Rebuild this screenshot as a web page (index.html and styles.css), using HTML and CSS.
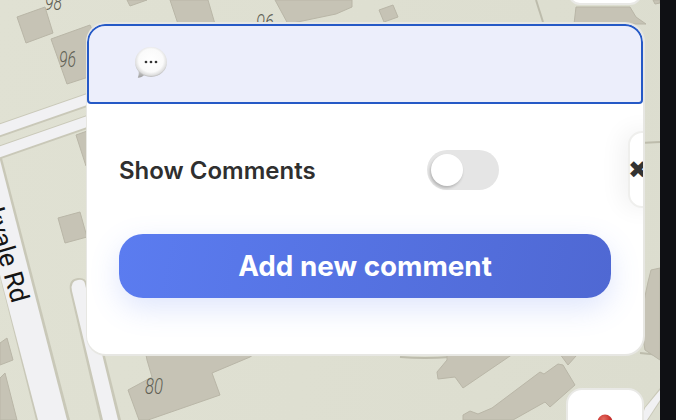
FILE: index.html
```html
<!DOCTYPE html>
<html lang="en">
<head>
<meta charset="utf-8">
<title>Comments</title>
<link rel="stylesheet" href="styles.css">
</head>
<body>
<div class="screen">
  <main class="map">
    <svg class="map-art" width="660" height="420" viewBox="0 0 660 420" aria-hidden="true">
      <g class="road-edge">
        <path d="M-2 124 L90 92 L90 106 L-2 138Z"/>
        <path d="M-2 146 L90 114 L90 128 L-2 160Z"/>
        <path d="M2 158 L-30 158 L36 420 L70 420Z"/>
        <path d="M70 291 Q68 279 78 278 Q86 277 87 284 L121 420 L100 420Z"/>
        <path d="M644 408 L660 388 L660 402 L648 420 L640 420Z"/>
      </g>
      <g class="road">
        <path d="M-2 125 L90 93 L90 104 L-2 136Z"/>
        <path d="M-2 147 L90 115 L90 126 L-2 158Z"/>
        <path d="M0 160 L-30 160 L38 420 L67 420Z"/>
        <path d="M72 291 Q70 281 78 280 Q84 279 85 284 L118 420 L103 420Z"/>
        <path d="M645 408 L660 390 L660 400 L647 420 L641 420Z"/>
      </g>
      <g class="lines">
        <path d="M536 0 L543 22"/>
        <path d="M640 143 L660 142"/>
        <path d="M640 353 L660 355"/>
        <path d="M400 357 Q425 359 450 357"/>
      </g>
      <g class="buildings">
        <path d="M17 17 L45 7 L53 33 L26 43Z"/>
        <path d="M51 39 L90 25 L110 70 L67 84Z"/>
        <path d="M127 0 L147 0 L130 6Z"/>
        <path d="M170 0 L208 0 L215 24 L178 24Z"/>
        <path d="M275 0 L352 0 L352 7 L336 14 L288 24Z"/>
        <path d="M379 10 L393 5 L398 17 L384 22Z"/>
        <path d="M576 7 L630 7 L636 17 L646 24 L574 24Z"/>
        <path d="M653 0 L660 0 L660 3 L655 4Z"/>
        <path d="M76 135 L90 130 L90 165 L86 166Z"/>
        <path d="M58 218 L80 212 L87 237 L65 243Z"/>
        <path d="M0 343 L7 338 L13 360 L0 365Z"/>
        <path d="M0 378 L5 373 L17 420 L0 420Z"/>
        <path d="M147 360 L145 350 L260 350 L250 357 L212 373 L220 395 L148 420 L139 420 L128 390 L152 377Z"/>
        <path d="M437 372 L447 360 L447 350 L520 350 L510 356 L463 388 L455 377 L438 379Z"/>
        <path d="M557 350 L580 350 L576 356 L568 365Z"/>
        <path d="M463 420 L463 415 L470 411 L478 414 L492 408 L500 402 L540 372 L544 374 L558 364 L563 365 L575 385 L550 407 L545 402 L513 420Z"/>
        <path d="M648 282 L651 270 L660 268 L660 360 L645 350 L640 320Z"/>
      </g>
      <g class="labels">
        <text x="45" y="10" textLength="17" lengthAdjust="spacingAndGlyphs">98</text>
        <text x="59" y="67" textLength="17" lengthAdjust="spacingAndGlyphs">96</text>
        <text x="256" y="30" textLength="18" lengthAdjust="spacingAndGlyphs">96</text>
        <text x="145" y="394" textLength="18" lengthAdjust="spacingAndGlyphs">80</text>
      </g>
      <text class="street" text-anchor="end" transform="translate(12 304) rotate(74)">Parkvale Rd</text>
    </svg>

    <div class="float-btn float-top"></div>
    <div class="float-btn float-pin">
      <svg class="pin" width="16" height="16" viewBox="0 0 16 16" aria-hidden="true">
        <defs>
          <radialGradient id="pinball" cx="0.4" cy="0.3" r="0.8">
            <stop offset="0" stop-color="#e46a5f"/>
            <stop offset="0.6" stop-color="#c62f2b"/>
            <stop offset="1" stop-color="#8e1d1c"/>
          </radialGradient>
        </defs>
        <circle cx="8" cy="8" r="7.5" fill="url(#pinball)"/>
      </svg>
    </div>

    <section class="panel">
      <header class="panel-head">
        <svg class="bubble" width="36" height="36" viewBox="0 0 36 36" aria-hidden="true">
          <defs>
            <radialGradient id="bubblefill" cx="0.5" cy="0.45" r="0.55">
              <stop offset="0" stop-color="#ffffff"/>
              <stop offset="0.7" stop-color="#fafafa"/>
              <stop offset="0.9" stop-color="#dedede"/>
              <stop offset="1" stop-color="#b4b4b4"/>
            </radialGradient>
            <linearGradient id="bubbletail" x1="0" y1="0" x2="0" y2="1">
              <stop offset="0" stop-color="#d0d0d0"/>
              <stop offset="1" stop-color="#9c9c9c"/>
            </linearGradient>
          </defs>
          <path d="M4.8 32.8 C5.8 30.5 6 28 5.4 25.5 L11.5 29.5 C9.8 31.6 7.5 32.8 4.8 32.8Z" fill="url(#bubbletail)"/>
          <ellipse cx="18" cy="17" rx="16" ry="15" fill="url(#bubblefill)"/>
          <circle cx="13" cy="17" r="1.35" fill="#333"/>
          <circle cx="18" cy="17" r="1.35" fill="#333"/>
          <circle cx="23" cy="17" r="1.35" fill="#333"/>
        </svg>
      </header>
      <div class="panel-body">
        <div class="row">
          <span class="row-label">Show Comments</span>
          <span class="toggle"><span class="knob"></span></span>
        </div>
        <button class="add-btn" type="button">Add new comment</button>
      </div>
      <div class="close-tab"><span class="close-mark">✖</span></div>
    </section>
  </main>
  <aside class="edge"></aside>
</div>
</body>
</html>
```
FILE: styles.css
```css
* { box-sizing: border-box; }
html, body { margin: 0; height: 100%; overflow: hidden; }
body { font-family: "Inter", "Liberation Sans", sans-serif; background: #0f1014; }

.screen { display: flex; width: 676px; height: 420px; }
.map {
  position: relative;
  flex: 0 0 660px;
  height: 420px;
  overflow: hidden;
  background: linear-gradient(100deg, #e0e1d3, #dcddcf);
  padding: 22px 15px 0 86px;
}
.edge { flex: 1; background: #0f1014; }

.map-art { position: absolute; left: 0; top: 0; }
.road-edge path { fill: #c9c8b8; }
.road path { fill: #f1f1f3; }
.lines path { fill: none; stroke: #bdbcac; stroke-width: 2; }
.buildings path { fill: #c6c3b5; stroke: #b9b6a7; stroke-width: 1; }
.labels text {
  font-family: "Roboto", sans-serif;
  font-style: italic;
  font-weight: 300;
  font-size: 22px;
  fill: #5f5f54;
}
.street { font-family: "Roboto", sans-serif; font-size: 26px; fill: #151515; }

.float-btn {
  position: absolute;
  background: #fff;
  border: 2px solid #e9e9e6;
}
.float-top { left: 568px; top: -30px; width: 74px; height: 35px; border-radius: 12px; }
.float-pin { left: 566px; top: 388px; width: 78px; height: 60px; border-radius: 16px; }
.pin { position: absolute; left: 29px; top: 24px; }

.panel {
  position: relative;
  width: 559px;
  height: 334px;
  background: #fff;
  border-style: solid;
  border-color: #e7e7e3;
  border-width: 2px 2px 2px 1px;
  border-radius: 20px;
  overflow: hidden;
  z-index: 1;
}
.panel-head {
  display: flex;
  align-items: center;
  height: 80px;
  padding: 0 0 3px 44px;
  background: #eceefb;
  border: 2px solid #2559c6;
  border-radius: 18px 18px 4px 4px;
}
.bubble { flex: none; }
.panel-body { padding: 46px 32px 0; }
.row {
  display: flex;
  align-items: center;
  justify-content: space-between;
  height: 40px;
  padding-right: 112px;
}
.row-label { font-size: 24px; font-weight: 600; color: #2f2f2f; }
.toggle {
  display: block;
  width: 72px;
  height: 40px;
  padding: 4px;
  border-radius: 20px;
  background: #e5e5e5;
}
.knob {
  display: block;
  width: 32px;
  height: 32px;
  border-radius: 50%;
  background: #fff;
  box-shadow: -1px 2px 3px rgba(0, 0, 0, .22);
}
.add-btn {
  display: block;
  width: 492px;
  height: 64px;
  margin-top: 44px;
  border: 0;
  border-radius: 24px;
  background: linear-gradient(100deg, #5b7cf0, #4f68d3);
  box-shadow: 0 10px 30px rgba(91, 124, 240, .2);
  color: #fff;
  font: 700 27.8px "Inter", "Liberation Sans", sans-serif;
}
.close-tab {
  position: absolute;
  left: 541px;
  top: 107px;
  width: 40px;
  height: 77px;
  display: flex;
  align-items: center;
  background: #fff;
  border: 2px solid #efefed;
  border-radius: 14px;
  box-shadow: -6px 0 24px rgba(0, 0, 0, .06);
}
.close-mark { margin-left: -2px; font: 24px "DejaVu Sans", sans-serif; color: #333; }
```
